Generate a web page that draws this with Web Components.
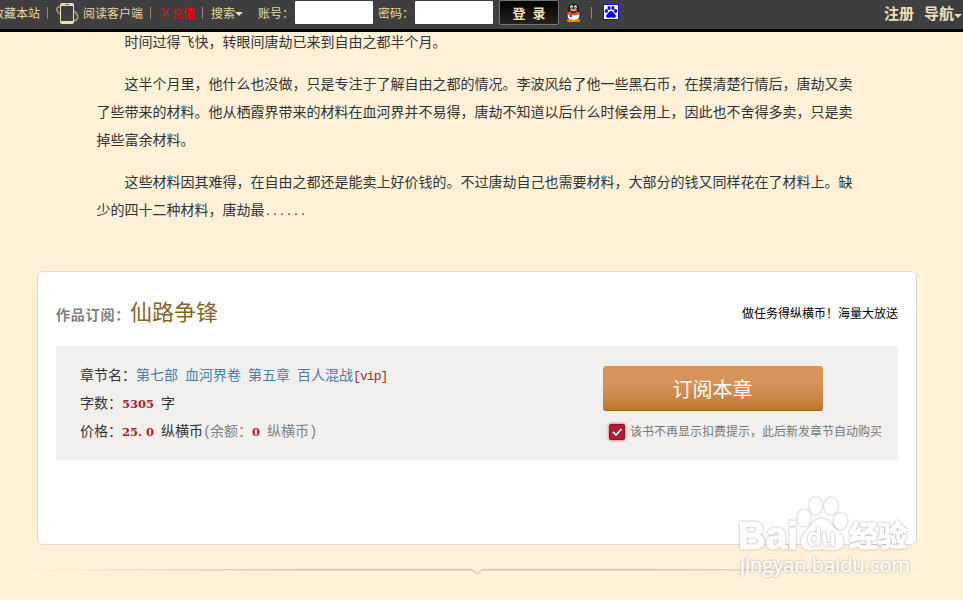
<!DOCTYPE html>
<html lang="zh-CN">
<head>
<meta charset="utf-8">
<title>仙路争锋</title>
<style>
	html, body {
		margin: 0;
		height: 600px;
		overflow: hidden;
		background: #fff0d8;
		color: #333;
		font: 14px/28px "Noto Sans CJK SC", sans-serif;
	}
	.dots {
		font-family: "Liberation Mono", "Noto Sans CJK SC", monospace;
		font-size: 11.67px;
		line-height: 1;
	}
</style>
</head>
<body>
<reader-page>
	<top-bar slot="top"></top-bar>
	<book-text>
		<p>时间过得飞快，转眼间唐劫已来到自由之都半个月。</p>
		<p>这半个月里，他什么也没做，只是专注于了解自由之都的情况。李波风给了他一些黑石币，在摸清楚行情后，唐劫又卖了些带来的材料。他从栖霞界带来的材料在血河界并不易得，唐劫不知道以后什么时候会用上，因此也不舍得多卖，只是卖掉些富余材料。</p>
		<p>这些材料因其难得，在自由之都还是能卖上好价钱的。不过唐劫自己也需要材料，大部分的钱又同样花在了材料上。缺少的四十二种材料，唐劫最<span class="dots">......</span></p>
	</book-text>
	<order-card book="仙路争锋">
		<span slot="promo">做任务得纵横币！海量大放送</span>
		<order-info slot="info"></order-info>
		<order-action slot="action" label="订阅本章">该书不再显示扣费提示，此后新发章节自动购买</order-action>
	</order-card>
	<page-divider></page-divider>
	<water-mark slot="mark"></water-mark>
</reader-page>

<script>
//根据html字符串生成shadow DOM
function attach (el, html) {
	const template = document.createElement('template');
	template.innerHTML = html;
	const root = el.attachShadow({ mode : 'open' });
	root.appendChild(template.content.cloneNode(true));
	return root;
}

//页面框架
class ReaderPage extends HTMLElement {
	constructor () {
		super();
		attach(this, `
			<style>
				:host {
					display: block;
					position: relative;
					width: 963px;
					height: 600px;
					overflow: hidden;
				}
			</style>
			<slot name="top"></slot>
			<slot></slot>
			<slot name="mark"></slot>
		`);
	}
}

//工具栏分隔线
class BarSep extends HTMLElement {
	constructor () {
		super();
		attach(this, `
			<style>
				:host {
					display: block;
					flex: none;
					width: 1px;
					height: 12px;
					background: #a0826f;
				}
			</style>
		`);
	}
}

//下拉小三角
class BarCaret extends HTMLElement {
	constructor () {
		super();
		attach(this, `
			<style>
				:host {
					display: block;
					flex: none;
					border: 4px solid transparent;
					border-top-color: #eddcb0;
					border-bottom: 0;
				}
			</style>
		`);
	}
}

class TopBar extends HTMLElement {
	constructor () {
		super();
		attach(this, `
			<style>
				:host {
					display: flex;
					box-sizing: border-box;
					height: 32px;
					padding-bottom: 4px;
					background: #3f3f3f;
					border-bottom: 3px solid #000;
					color: #e8d9a5;
					font-size: 12px;
					line-height: 25px;
					white-space: nowrap;
					justify-content: space-between;
				}
				.left, .right {
					display: flex;
					align-items: center;
					height: 25px;
				}
				.left {
					margin-left: -8px;
				}
				.right {
					margin-right: 1px;
					color: #f0deb8;
					font-size: 15px;
					font-weight: bold;
				}
				svg {
					display: block;
					flex: none;
				}
				.phone { margin: 2px 4px 0 0; }
				.pay { color: #f00; }
				bar-sep { margin: 0 8px 0 7px; }
				bar-caret { margin-top: 2px; }
				.right bar-caret { margin-top: 6px; }
				input {
					box-sizing: border-box;
					width: 78px;
					height: 23px;
					margin: 0 5px;
					padding: 0;
					border: 0;
					border-radius: 1px;
					background: #fff;
				}
				.field {
					width: 32px;
				}
				button {
					box-sizing: border-box;
					width: 60px;
					height: 25px;
					margin: 0 6px 0 1px;
					padding: 0;
					border: 1px solid #777;
					border-radius: 2px;
					background: linear-gradient(#000, #252320);
					color: #f2dfb9;
					font: bold 13px/22px "Noto Sans CJK SC", sans-serif;
					word-spacing: 4px;
				}
			</style>
			<div class="left">
				<span>收藏本站</span>
				<bar-sep></bar-sep>
				<svg class="phone" width="23" height="23" viewBox="0 0 23 23">
					<path d="M5 4.500C1 4.500-.5 7 2 10l3 3M18 9c4 3 5 7 2 9l-4 2" fill="none" stroke="#a99b82" stroke-width="1.6"/>
					<rect x="4" y="1" width="14" height="21" rx="2" fill="#f2dfac"/>
					<rect x="5" y="4" width="12" height="15" fill="#3f3f3f"/>
					<rect x="9" y="2" width="4" height="1" fill="#6b6250"/>
				</svg>
				<span>阅读客户端</span>
				<bar-sep></bar-sep>
				<span class="pay">￥充值</span>
				<bar-sep></bar-sep>
				<span>搜索</span>
				<bar-caret></bar-caret>
				<span class="field" style="margin-left:15px">账号：</span>
				<input type="text">
				<span class="field">密码：</span>
				<input type="password">
				<button>登 录</button>
				<svg width="18" height="20" viewBox="0 0 18 20">
					<ellipse cx="8.500" cy="11" rx="7.500" ry="5.500" fill="#222"/>
					<ellipse cx="8.500" cy="12.500" rx="6" ry="5" fill="#fff"/>
					<path d="M1.500 17q3.500-2 7 .5q3.500-2.500 7-.5l-1.500 2H3z" fill="#ee8a1c"/>
					<ellipse cx="8.500" cy="5.500" rx="5.500" ry="5" fill="#222"/>
					<ellipse cx="6.600" cy="4" rx="1.400" ry="1.800" fill="#fff"/>
					<ellipse cx="10.400" cy="4" rx="1.400" ry="1.800" fill="#fff"/>
					<circle cx="6.900" cy="4.300" r=".6"/><circle cx="10.100" cy="4.300" r=".6"/>
					<ellipse cx="8.500" cy="7.200" rx="3.400" ry="1.100" fill="#f6a623"/>
					<path d="M1.800 8.500q6.700 3 13.400 0l.3 2.300q-4 1.500-8.300 1.300l-.3 2.500-2.500-.5.300-2.300Q2.500 11.500 1.500 10.500z" fill="#e8391c"/>
				</svg>
				<bar-sep style="margin:0 11px 0 8px"></bar-sep>
				<svg width="16" height="16" viewBox="0 0 16 16" style="margin-top:-2px">
					<rect width="16" height="16" fill="#1512d8"/>
					<rect x="1" y="1" width="14" height="14" fill="#fff"/>
					<g fill="#0b08f0">
						<ellipse cx="3.400" cy="7" rx="1.600" ry="1.900"/>
						<ellipse cx="6.100" cy="4" rx="1.600" ry="2"/>
						<ellipse cx="9.900" cy="4" rx="1.600" ry="2"/>
						<ellipse cx="12.600" cy="7" rx="1.600" ry="1.900"/>
						<path d="M8 7c2 0 2.500 2 4 3.300 1.800 1.600.7 3.700-1.200 3.700-1 0-1.600-.4-2.800-.4s-1.800.4-2.800.4C3.300 14 2.200 11.900 4 10.300 5.500 9 6 7 8 7z"/>
					</g>
				</svg>
			</div>
			<div class="right">
				<span style="margin-right:10px">注册</span>
				<span>导航</span>
				<bar-caret></bar-caret>
			</div>
		`);
	}
}

//正文
class BookText extends HTMLElement {
	constructor () {
		super();
		attach(this, `
			<style>
				:host {
					display: block;
					width: 757px;
					height: 240px;
					margin: -5px 0 0 96.500px;
				}
				::slotted(p) {
					margin: 0 0 14px;
					text-indent: 28px;
				}
			</style>
			<slot></slot>
		`);
	}
}

//订阅卡片
class OrderCard extends HTMLElement {
	constructor () {
		super();
		this._root = attach(this, `
			<style>
				:host {
					display: block;
					box-sizing: border-box;
					width: 880px;
					height: 274px;
					margin: 4px 0 0 37px;
					padding: 0 18px;
					border: 1px solid #d9d9d9;
					border-radius: 6px;
					background: #fff;
				}
				.head {
					display: flex;
					align-items: baseline;
					height: 56px;
					padding-top: 18px;
					line-height: 40px;
				}
				.name {
					width: 74px;
					color: #808080;
					font-weight: bold;
					letter-spacing: 0.8px;
					white-space: nowrap;
				}
				h2 {
					flex: 1;
					margin: 0;
					font-size: 22px;
					font-weight: normal;
					color: #8a6428;
				}
				.promo {
					align-self: flex-start;
					margin-top: 3px;
					font-size: 12px;
					color: #000;
				}
				.body {
					display: flex;
					justify-content: space-between;
					box-sizing: border-box;
					height: 114px;
					padding: 16px 15px 0 24px;
					background: #f2f0ee;
				}
			</style>
			<div class="head">
				<span class="name">作品订阅：</span>
				<h2></h2>
				<span class="promo"><slot name="promo"></slot></span>
			</div>
			<div class="body">
				<slot name="info"></slot>
				<slot name="action"></slot>
			</div>
		`);
	}

	connectedCallback () {
		this._root.querySelector('h2').textContent = this.getAttribute('book');
	}
}

//章节信息
class OrderInfo extends HTMLElement {
	constructor () {
		super();
		attach(this, `
			<style>
				:host {
					display: block;
					font-family: "Liberation Mono", "Noto Sans CJK SC", monospace;
					word-spacing: -1.4px;
					white-space: nowrap;
				}
				div { height: 28px; }
				a { color: #4680a6; }
				em {
					font-style: normal;
					font-size: 13px;
					letter-spacing: -0.9px;
					color: #b92035;
				}
				b {
					font: bold 11.5px "DejaVu Serif", serif;
					color: #b01c2e;
				}
				i {
					display: inline-block;
					width: 8px;
					font-style: normal;
				}
				.gray { color: #808080; }
				.p { letter-spacing: -1.4px; }
			</style>
			<div>章节名：<a>第七部 血河界卷 第五章 百人混战</a><em>[vip]</em></div>
			<div>字数：<b>5305</b> 字</div>
			<div>价格：<b>25<i>.</i>0</b> 纵横币<span class="gray"><span class="p">(</span>余额：<b>0</b> 纵横币<span class="p">)</span></span></div>
		`);
	}
}

//订阅按钮和自动购买
class OrderAction extends HTMLElement {
	constructor () {
		super();
		this._root = attach(this, `
			<style>
				:host {
					display: block;
					width: 280px;
					padding-top: 4px;
				}
				button {
					display: block;
					box-sizing: border-box;
					width: 220px;
					height: 45px;
					padding: 2px 1px 0 0;
					border: 0;
					border-bottom: 1px solid #9c5a1e;
					border-radius: 3px;
					background: linear-gradient(#d6945b 0, #d6935a 40%, #c98545 75%, #bd7632);
					color: #fff;
					font: 20px/42px "Noto Sans CJK SC", sans-serif;
				}
				label {
					display: flex;
					align-items: center;
					height: 24px;
					margin: 9px 0 0 6px;
					font-size: 12px;
					line-height: 22px;
					color: #777;
					white-space: nowrap;
				}
				label span { margin-top: -2px; }
				svg {
					display: block;
					margin: 0 5px 0 0;
					border-radius: 2px;
					box-shadow: 0 0 3px #d2304a;
				}
			</style>
			<button></button>
			<label>
				<svg width="16" height="16" viewBox="0 0 16 16">
					<rect width="16" height="16" rx="1" fill="#b01c2e"/>
					<rect x=".5" y=".5" width="15" height="15" rx="1" fill="none" stroke="#8c1626"/>
					<path d="M4 8l3 3 5.500-6" fill="none" stroke="#fff" stroke-width="1.800"/>
				</svg>
				<span><slot></slot></span>
			</label>
		`);
	}

	connectedCallback () {
		this._root.querySelector('button').textContent = this.getAttribute('label');
	}
}

//底部分隔线，中间带一个小尖角
class PageDivider extends HTMLElement {
	constructor () {
		super();
		attach(this, `
			<style>
				:host {
					display: block;
					margin: 19px 0 0 24px;
				}
				svg { display: block; }
			</style>
			<svg width="906" height="14" viewBox="0 0 906 14">
				<defs>
					<linearGradient id="g" gradientUnits="userSpaceOnUse" x1="0" x2="906" y1="0" y2="0">
						<stop offset="0" stop-color="#cdc4bc" stop-opacity="0"/>
						<stop offset=".3" stop-color="#cdc4bc"/>
						<stop offset=".7" stop-color="#cdc4bc"/>
						<stop offset="1" stop-color="#cdc4bc" stop-opacity="0"/>
					</linearGradient>
				</defs>
				<g fill="none" stroke="url(#g)">
					<path d="M0 6.500h448l5 4 5-4h448" stroke-width="1" opacity=".5"/>
					<path d="M0 5.500h448l5 4 5-4h448" stroke-width="1"/>
				</g>
			</svg>
		`);
	}
}

//右下角水印，浮在页面上面
class WaterMark extends HTMLElement {
	constructor () {
		super();
		attach(this, `
			<style>
				:host {
					display: block;
					position: absolute;
					left: 730px;
					top: 490px;
					pointer-events: none;
				}
				svg {
					display: block;
					opacity: .85;
				}
				text, .paw {
					fill: #fff;
					filter: drop-shadow(0 0 1px #999);
				}
				.big {
					stroke: #fff;
					stroke-width: 1.2px;
				}
			</style>
			<svg width="200" height="96" viewBox="0 0 200 96">
				<text class="big" x="8" y="59" font-family="Liberation Sans" font-weight="bold" font-size="38" textLength="60" lengthAdjust="spacingAndGlyphs">Bai</text>
				<g class="paw">
					<ellipse cx="74" cy="27.700" rx="6.800" ry="8.800"/>
					<ellipse cx="85.700" cy="15.700" rx="6.500" ry="9"/>
					<ellipse cx="101" cy="16.300" rx="7" ry="8.500"/>
					<ellipse cx="110.500" cy="31.300" rx="7" ry="8.200"/>
					<path d="M91.700 28.300c7 0 11 8 16 13 9 8 8 19-4 19-4 0-8-1-12-1s-7 1-11 1c-12 0-13-12-4-20 5-5 8-12 15-12z"/>
				</g>
				<text x="77" y="56" font-family="Liberation Sans" font-weight="bold" font-size="25" textLength="29" lengthAdjust="spacingAndGlyphs">du</text>
				<text class="big" x="119" y="57" font-family="Noto Sans CJK SC" font-weight="bold" font-size="29">经验</text>
				<text x="10" y="82" font-family="Open Sans" font-size="20" stroke="#fff" stroke-width=".5" textLength="170" lengthAdjust="spacingAndGlyphs">jingyan.baidu.com</text>
			</svg>
		`);
	}
}

window.customElements.define('bar-sep', BarSep);
window.customElements.define('bar-caret', BarCaret);
window.customElements.define('top-bar', TopBar);
window.customElements.define('book-text', BookText);
window.customElements.define('order-info', OrderInfo);
window.customElements.define('order-action', OrderAction);
window.customElements.define('order-card', OrderCard);
window.customElements.define('page-divider', PageDivider);
window.customElements.define('water-mark', WaterMark);
window.customElements.define('reader-page', ReaderPage);
</script>
</body>
</html>
